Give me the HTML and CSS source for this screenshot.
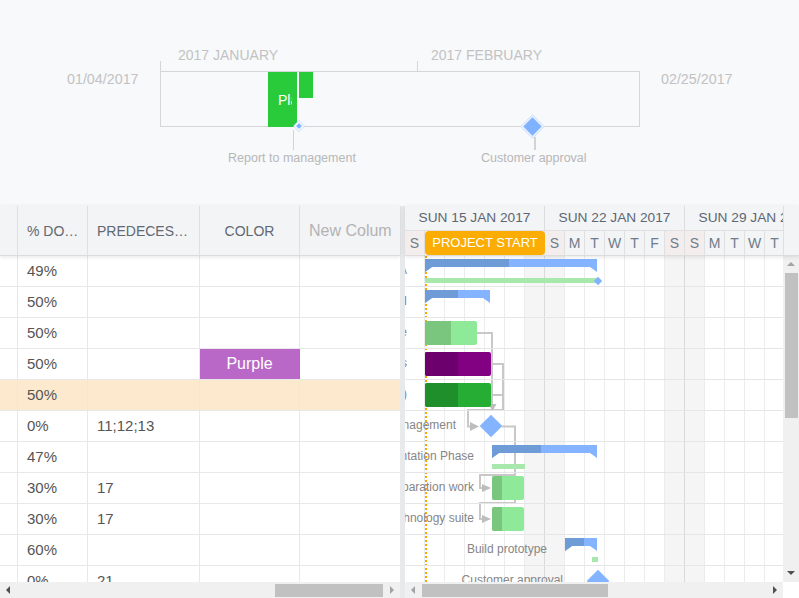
FILE: index.html
```html
<!DOCTYPE html>
<html>
<head>
<meta charset="utf-8">
<title>Gantt</title>
<link rel="stylesheet" href="styles.css">
</head>
<body>
<section class="overview">
  <div class="ov-month ov-jan">2017 JANUARY</div>
  <div class="ov-month ov-feb">2017 FEBRUARY</div>
  <div class="ov-date ov-start">01/04/2017</div>
  <div class="ov-date ov-end">02/25/2017</div>
  <div class="ov-tick ov-tick-jan"></div>
  <div class="ov-tick ov-tick-feb"></div>
  <div class="ov-box">
    <div class="ov-task ov-task1"><span>Planning</span></div>
    <div class="ov-task ov-task2"></div>
  </div>
  <div class="ov-stem ov-stem1"></div>
  <div class="ov-ms ov-ms-small"></div>
  <div class="ov-label ov-label1">Report to management</div>
  <div class="ov-stem ov-stem2"></div>
  <div class="ov-ms ov-ms-big"></div>
  <div class="ov-label ov-label2">Customer approval</div>
</section>

<section class="main">
  <div class="grid">
    <div class="g-head">
      <div></div>
      <div class="gh-cell">% DO…</div>
      <div class="gh-cell">PREDECES…</div>
      <div class="gh-cell gh-center">COLOR</div>
      <div class="gh-cell gh-new">New Colum</div>
    </div>
    <div class="g-body">
      <div class="g-row"><div></div><div>49%</div><div></div><div></div><div></div></div>
      <div class="g-row"><div></div><div>50%</div><div></div><div></div><div></div></div>
      <div class="g-row"><div></div><div>50%</div><div></div><div></div><div></div></div>
      <div class="g-row"><div></div><div>50%</div><div></div><div class="c-purple">Purple</div><div></div></div>
      <div class="g-row hl"><div></div><div>50%</div><div></div><div></div><div></div></div>
      <div class="g-row"><div></div><div>0%</div><div>11;12;13</div><div></div><div></div></div>
      <div class="g-row"><div></div><div>47%</div><div></div><div></div><div></div></div>
      <div class="g-row"><div></div><div>30%</div><div>17</div><div></div><div></div></div>
      <div class="g-row"><div></div><div>30%</div><div>17</div><div></div><div></div></div>
      <div class="g-row"><div></div><div>60%</div><div></div><div></div><div></div></div>
      <div class="g-row"><div></div><div>0%</div><div>21</div><div></div><div></div></div>
    </div>
    <div class="hscroll">
      <div class="arr arr-left"></div>
      <div class="track"><div class="thumb" style="margin-left:259px;width:108px"></div></div>
      <div class="arr arr-right dim"></div>
    </div>
  </div>

  <div class="splitter"></div>

  <div class="gantt">
    <div class="gt-head">
      <div class="gt-scale">
        <div class="gt-weeks">
          <div class="gt-week">SUN 15 JAN 2017</div>
          <div class="gt-week">SUN 22 JAN 2017</div>
          <div class="gt-week">SUN 29 JAN 2017</div>
        </div>
        <div class="gt-days">
          <div class="gt-day we">S</div><div class="gt-day"></div><div class="gt-day"></div><div class="gt-day"></div><div class="gt-day"></div><div class="gt-day"></div><div class="gt-day we"></div>
          <div class="gt-day we">S</div><div class="gt-day">M</div><div class="gt-day">T</div><div class="gt-day">W</div><div class="gt-day">T</div><div class="gt-day">F</div><div class="gt-day we">S</div>
          <div class="gt-day we">S</div><div class="gt-day">M</div><div class="gt-day">T</div><div class="gt-day">W</div><div class="gt-day">T</div><div class="gt-day">F</div>
        </div>
        <div class="marker">PROJECT START</div>
      </div>
      <div class="gt-corner"></div>
    </div>

    <div class="gt-body">
      <div class="canvas">
        <div class="today"></div>
        <svg class="links" width="378" height="326" viewBox="0 0 378 326">
          <g fill="none" stroke="#c8c8c8" stroke-width="2">
            <path d="M72 77H87V148"/>
            <path d="M86 108H98V154H63V170.5H66"/>
            <path d="M86 139H98"/>
            <path d="M97 170.5H110V247"/>
            <path d="M110 219H75V232H78"/>
            <path d="M110 247H75V263H78"/>
          </g>
          <g fill="#bdbdbd">
            <path d="M83.5 148H91.5L87.5 155Z"/>
            <path d="M65 166V175L74 170.5Z"/>
            <path d="M77 228V236L86 232Z"/>
            <path d="M77 259V267L86 263Z"/>
          </g>
        </svg>

        <div class="gt-row">
          <div class="item" style="left:20px">
            <span class="lbl">Planning Phase A</span>
            <div class="summary" style="width:172px"><i style="width:84px"></i></div>
            <div class="baseline" style="width:172px"></div>
            <div class="ms-mini" style="left:170px"></div>
          </div>
        </div>
        <div class="gt-row">
          <div class="item" style="left:20px">
            <span class="lbl">Research Phase I</span>
            <div class="summary" style="width:65px"><i style="width:33px"></i></div>
          </div>
        </div>
        <div class="gt-row">
          <div class="item" style="left:20px">
            <span class="lbl">Define scope</span>
            <div class="task t-light" style="width:52px"><i style="width:26px"></i></div>
          </div>
        </div>
        <div class="gt-row">
          <div class="item" style="left:20px">
            <span class="lbl">Analyze requirements</span>
            <div class="task t-purple" style="width:66px"><i style="width:33px"></i></div>
          </div>
        </div>
        <div class="gt-row">
          <div class="item" style="left:20px">
            <span class="lbl">Review (v1.0)</span>
            <div class="task t-green" style="width:66px"><i style="width:33px"></i></div>
          </div>
        </div>
        <div class="gt-row">
          <div class="item" style="left:86px">
            <span class="lbl lbl-ms">Report to management</span>
            <div class="ms"></div>
          </div>
        </div>
        <div class="gt-row">
          <div class="item" style="left:87px">
            <span class="lbl">Implementation Phase</span>
            <div class="summary" style="width:105px"><i style="width:49px"></i></div>
            <div class="baseline" style="width:33px"></div>
          </div>
        </div>
        <div class="gt-row">
          <div class="item" style="left:87px">
            <span class="lbl">Preparation work</span>
            <div class="task t-light" style="width:32px"><i style="width:10px"></i></div>
          </div>
        </div>
        <div class="gt-row">
          <div class="item" style="left:87px">
            <span class="lbl">Select technology suite</span>
            <div class="task t-light" style="width:32px"><i style="width:10px"></i></div>
          </div>
        </div>
        <div class="gt-row">
          <div class="item" style="left:160px">
            <span class="lbl">Build prototype</span>
            <div class="summary" style="width:32px"><i style="width:19px"></i></div>
            <div class="baseline" style="left:27px;width:6px"></div>
          </div>
        </div>
        <div class="gt-row">
          <div class="item" style="left:193px">
            <span class="lbl lbl-ms">Customer approval</span>
            <div class="ms"></div>
          </div>
        </div>
      </div>
      <div class="vscroll">
        <div class="arr arr-up dim"></div>
        <div class="vthumb"></div>
        <div class="vspace"></div>
        <div class="arr arr-down"></div>
      </div>
    </div>

    <div class="gt-foot">
      <div class="hscroll gt-hscroll">
        <div class="arr arr-left dim"></div>
        <div class="track"><div class="thumb" style="margin-left:1px;width:186px"></div></div>
        <div class="arr arr-right"></div>
      </div>
      <div class="corner"></div>
    </div>
  </div>
</section>
</body>
</html>
```

FILE: styles.css
```css
* { box-sizing: border-box; }
html, body { margin: 0; padding: 0; }
body {
  width: 799px;
  height: 598px;
  overflow: hidden;
  background: #fff;
  font-family: "Liberation Sans", Arial, sans-serif;
}

/* ---------- overview timeline ---------- */
.overview { position: relative; height: 206px; background: #f8f9fb; }
.ov-month { position: absolute; top: 47px; font-size: 14px; line-height: 16px; color: #c2c2c2; }
.ov-jan { left: 178px; }
.ov-feb { left: 431px; }
.ov-date { position: absolute; top: 71px; font-size: 14.3px; line-height: 16px; color: #c2c2c2; }
.ov-start { left: 67px; }
.ov-end { left: 661px; }
.ov-tick { position: absolute; top: 61px; width: 1px; height: 10px; background: #d6d6d6; }
.ov-tick-jan { left: 160px; }
.ov-tick-feb { left: 417px; }
.ov-box {
  position: absolute; left: 160px; top: 71px;
  width: 480px; height: 56px;
  border: 1px solid #d6d6d6;
}
.ov-task { position: absolute; top: 0; background: #29cb3a; }
.ov-task1 { left: 107px; width: 29px; height: 55px; display: flex; align-items: center; }
.ov-task1 span {
  margin: 0 5px 0 10px; overflow: hidden; white-space: nowrap;
  color: #fff; font-size: 14px; line-height: 16px;
}
.ov-task2 { left: 138px; width: 14px; height: 26px; }
.ov-ms { position: absolute; transform: rotate(45deg); background: #7fb2ff; }
.ov-ms-small { left: 295px; top: 122px; width: 8px; height: 8px; border: 2px solid #eef3fd; }
.ov-ms-big { left: 524px; top: 118px; width: 17px; height: 17px; border: 2px solid #e8effc; }
.ov-stem { position: absolute; background: #d3d3d3; }
.ov-stem1 { left: 293px; top: 130px; width: 1px; height: 20px; }
.ov-stem2 { left: 534px; top: 137px; width: 2px; height: 13px; }
.ov-label { position: absolute; top: 150px; font-size: 12.5px; line-height: 16px; color: #b7b7b7; white-space: nowrap; }
.ov-label1 { left: 228px; }
.ov-label2 { left: 481px; }

/* ---------- main ---------- */
.main { display: flex; height: 392px; }

.grid { width: 400px; flex: none; display: flex; flex-direction: column; }
.g-head {
  height: 50px; flex: none;
  display: grid; grid-template-columns: 18px 70px 112px 100px 100px;
  background: #f3f4f6;
  border-bottom: 1px solid #dcdcdc;
  box-shadow: 0 1px 4px rgba(0,0,0,0.10);
  position: relative; z-index: 2;
}
.g-head > div { border-right: 1px solid #e0e0e0; }
.g-head > div:last-child { border-right: none; }
.gh-cell {
  display: flex; align-items: center; padding-left: 9px;
  font-size: 14px; color: #5f6873; white-space: nowrap; overflow: hidden;
}
.gh-center { justify-content: center; padding-left: 0; }
.gh-new { font-size: 16px; color: #b3b3b3; }

.g-body { flex: 1; overflow: hidden; min-height: 0; }
.g-row {
  display: grid; grid-template-columns: 18px 70px 112px 100px 100px;
  height: 31px; border-bottom: 1px solid #e8e8e8;
}
.g-row > div {
  border-right: 1px solid #e8e8e8;
  padding-left: 9px;
  font-size: 15px; line-height: 30px; color: #555;
  white-space: nowrap; overflow: hidden;
}
.g-row > div:last-child { border-right: none; }
.g-row.hl { background: #fde9ce; }
.g-row > .c-purple {
  background: #ba68c8; color: #fff; font-size: 16px;
  text-align: center; padding-left: 0; border-right-color: #ba68c8;
}

/* scrollbars */
.hscroll { height: 16px; flex: none; display: flex; background: #f0f0f0; }
.arr { width: 16px; height: 16px; flex: none; display: flex; align-items: center; justify-content: center; }
.arr::before { content: ""; width: 0; height: 0; border-style: solid; }
.arr-left::before { border-width: 4px 4px 4px 0; border-color: transparent #505050 transparent transparent; }
.arr-right::before { border-width: 4px 0 4px 4px; border-color: transparent transparent transparent #505050; }
.arr-up::before { border-width: 0 4px 4px 4px; border-color: transparent transparent #505050 transparent; }
.arr-down::before { border-width: 4px 4px 0 4px; border-color: #505050 transparent transparent transparent; }
.arr-down { align-items: flex-start; padding-top: 5px; }
.arr-left.dim::before { border-right-color: #a3a3a3; }
.arr-right.dim::before { border-left-color: #a3a3a3; }
.arr-up.dim::before { border-bottom-color: #a3a3a3; }
.track { flex: 1; display: flex; align-items: flex-start; padding-top: 2px; min-width: 0; }
.thumb { height: 13px; flex: none; background: #c1c1c1; }

.splitter { width: 5px; flex: none; background: #e8e9eb; }

/* ---------- gantt ---------- */
.gantt { flex: 1; min-width: 0; display: flex; flex-direction: column; }
.gt-head {
  height: 50px; flex: none; display: flex;
  background: #f3f4f6;
  border-bottom: 1px solid #dcdcdc;
  box-shadow: 0 1px 4px rgba(0,0,0,0.10);
  position: relative; z-index: 2;
}
.gt-scale { flex: 1; min-width: 0; overflow: hidden; position: relative; display: flex; flex-direction: column; }
.gt-weeks { height: 25px; display: flex; border-bottom: 1px solid #e0e0e0; }
.gt-week {
  flex: none; width: 140px; border-right: 1px solid #dcdcdc;
  text-align: center; line-height: 24px; font-size: 13.7px; color: #5d6672; white-space: nowrap;
}
.gt-days { height: 24px; display: flex; }
.gt-day {
  flex: none; width: 20px; border-right: 1px solid #e0e0e0;
  text-align: center; line-height: 24px; font-size: 14px; color: #6f7c8a;
}
.gt-day.we { background: #f4eded; }
.gt-corner { width: 16px; flex: none; border-left: 1px solid #e0e0e0; }
.marker {
  position: absolute; left: 20px; top: 25px; width: 120px; height: 24px;
  background: #fbad04; border-radius: 4px;
  color: #fff; font-size: 13px; line-height: 24px; text-align: center; white-space: nowrap;
}

.gt-body { flex: 1; min-height: 0; display: flex; }
.canvas {
  flex: 1; min-width: 0; position: relative; overflow: hidden;
  background-color: #fff;
  background-image:
    linear-gradient(to right, transparent 139px, #dadada 139px 140px, transparent 140px 279px, #dadada 279px 280px, transparent 280px),
    repeating-linear-gradient(to right, transparent 0 19px, #ececec 19px 20px),
    linear-gradient(to right, transparent 120px, #f5f5f5 120px 160px, transparent 160px 260px, #f5f5f5 260px 300px, transparent 300px);
}
.today { position: absolute; left: 20px; top: 0; bottom: 0; border-left: 2px dotted #f6a700; }
.links { position: absolute; left: 0; top: 0; }

.gt-row { position: relative; height: 31px; border-bottom: 1px solid #e6e6e6; }
.item { position: absolute; top: 0; width: 0; height: 30px; }
.lbl {
  position: absolute; right: 18px; top: 0;
  line-height: 29px; font-size: 12px; color: #868686; white-space: nowrap;
}
.lbl-ms { right: 35px; }

.summary {
  position: absolute; left: 0; top: 3px; height: 13px;
  background: #84b4ff;
  clip-path: polygon(0 0, 100% 0, 100% 100%, calc(100% - 7px) 8px, 7px 8px, 0 100%);
}
.summary i { display: block; height: 13px; background: #6f9bd6; }
.baseline { position: absolute; left: 0; top: 22px; height: 5px; background: #a8e8ac; }
.ms-mini { position: absolute; top: 22px; width: 6px; height: 6px; background: #84b4ff; transform: rotate(45deg); }

.task { position: absolute; left: 0; top: 3px; height: 24px; border-radius: 2px; overflow: hidden; display: flex; }
.task i { display: block; height: 100%; }
.t-light { background: #8ee998; }
.t-light i { background: #7bc67e; }
.t-purple { background: #820082; }
.t-purple i { background: #6c006c; }
.t-green { background: #26ad33; }
.t-green i { background: #1e8f2a; }

.ms {
  position: absolute; left: -8px; top: 7px; width: 16px; height: 16px;
  background: #84b4ff; transform: rotate(45deg);
}

.vscroll { width: 16px; flex: none; background: #f0f0f0; display: flex; flex-direction: column; }
.vthumb { width: 13px; height: 145px; margin: 1px 0 0 2px; background: #c1c1c1; flex: none; }
.vspace { flex: 1; }

.gt-foot { height: 16px; flex: none; display: flex; }
.gt-hscroll { flex: 1; min-width: 0; }
.corner { width: 16px; flex: none; background: #fff; }
```
